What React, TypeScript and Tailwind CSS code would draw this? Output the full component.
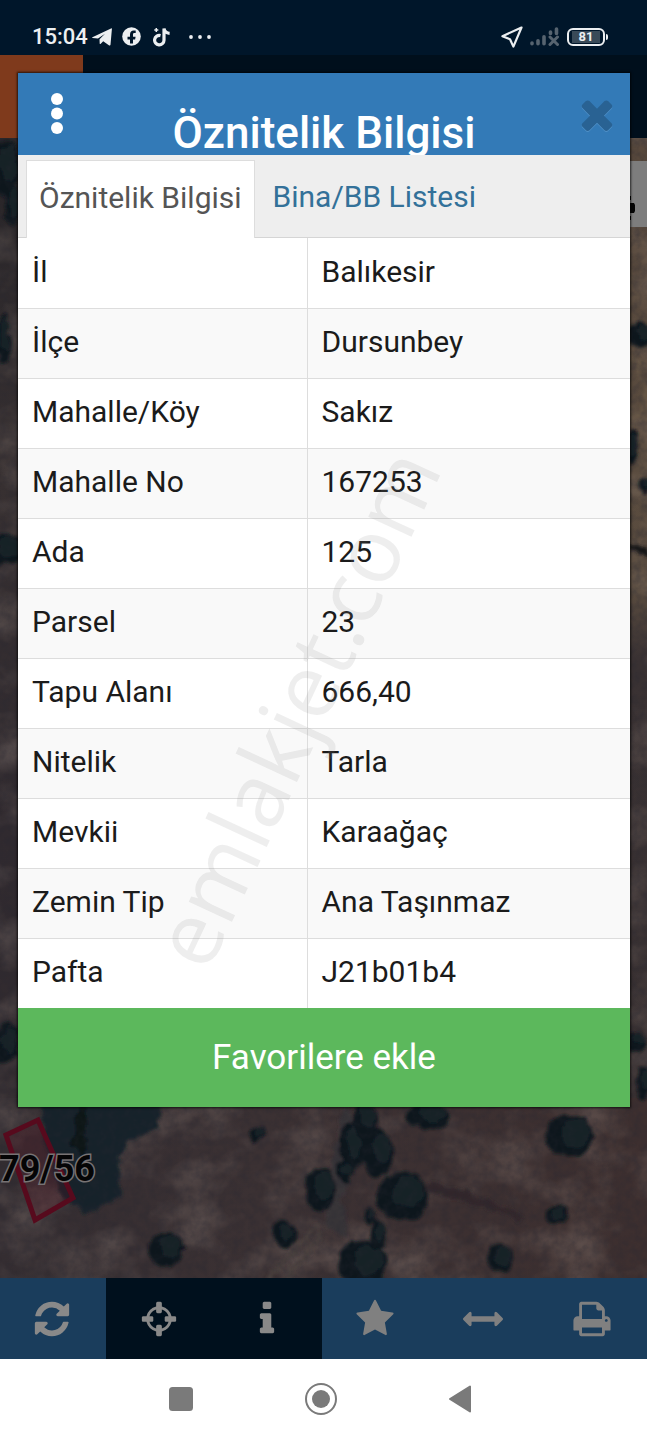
import React from "react";

const rows: [string, string][] = [
  ["İl", "Balıkesir"],
  ["İlçe", "Dursunbey"],
  ["Mahalle/Köy", "Sakız"],
  ["Mahalle No", "167253"],
  ["Ada", "125"],
  ["Parsel", "23"],
  ["Tapu Alanı", "666,40"],
  ["Nitelik", "Tarla"],
  ["Mevkii", "Karaağaç"],
  ["Zemin Tip", "Ana Taşınmaz"],
  ["Pafta", "J21b01b4"],
];

const paths = {
  refresh:
    "M1639 1056q0 5-1 7-64 268-268 434.5t-478 166.5q-146 0-282.5-55t-243.5-157l-129 129q-19 19-45 19t-45-19-19-45v-448q0-26 19-45t45-19h448q26 0 45 19t19 45-19 45l-137 137q71 66 161 102t187 36q134 0 250-65t186-179q11-17 53-117 8-23 30-23h192q13 0 22.5 9.5t9.5 22.5zm25-800v448q0 26-19 45t-45 19h-448q-26 0-45-19t-19-45 19-45l138-138q-148-137-349-137-134 0-250 65t-186 179q-11 17-53 117-8 23-30 23h-199q-13 0-22.5-9.5t-9.5-22.5v-7q65-268 270-434.5t480-166.5q146 0 284 55.5t245 156.5l130-129q19-19 45-19t45 19 19 45z",
  crosshairs:
    "M1325 1024h-109q-26 0-45-19t-19-45v-128q0-26 19-45t45-19h109q-32-108-112.5-188.5t-188.5-112.5v109q0 26-19 45t-45 19h-128q-26 0-45-19t-19-45v-109q-108 32-188.5 112.5t-112.5 188.5h109q26 0 45 19t19 45v128q0 26-19 45t-45 19h-109q32 108 112.5 188.5t188.5 112.5v-109q0-26 19-45t45-19h128q26 0 45 19t19 45v109q108-32 188.5-112.5t112.5-188.5zm339-192v128q0 26-19 45t-45 19h-143q-37 161-154.5 278.5t-278.5 154.5v143q0 26-19 45t-45 19h-128q-26 0-45-19t-19-45v-143q-161-37-278.5-154.5t-154.5-278.5h-143q-26 0-45-19t-19-45v-128q0-26 19-45t45-19h143q37-161 154.5-278.5t278.5-154.5v-143q0-26 19-45t45-19h128q26 0 45 19t19 45v143q161 37 278.5 154.5t154.5 278.5h143q26 0 45 19t19 45z",
  info: "M1216 1344v128q0 26-19 45t-45 19h-512q-26 0-45-19t-19-45v-128q0-26 19-45t45-19h64v-384h-64q-26 0-45-19t-19-45v-128q0-26 19-45t45-19h384q26 0 45 19t19 45v576h64q26 0 45 19t19 45zm-128-1152v192q0 26-19 45t-45 19h-256q-26 0-45-19t-19-45v-192q0-26 19-45t45-19h256q26 0 45 19t19 45z",
  star: "M1728 647q0 22-26 48l-363 354 86 500q1 7 1 20 0 21-10.5 35.5t-30.5 14.5q-19 0-40-12l-449-236-449 236q-22 12-40 12-21 0-31.5-14.5t-10.5-35.5q0-6 2-20l86-500-364-354q-25-27-25-48 0-37 56-46l502-73 225-455q19-41 49-41t49 41l225 455 502 73q56 9 56 46z",
  measure:
    "M1792 896q0 26-19 45l-256 256q-19 19-45 19t-45-19-19-45v-128h-1024v128q0 26-19 45t-45 19-45-19l-256-256q-19-19-19-45t19-45l256-256q19-19 45-19t45 19 19 45v128h1024v-128q0-26 19-45t45-19 45 19l256 256q19 19 19 45z",
  print:
    "M448 1536h896v-256h-896v256zm0-640h896v-384h-160q-40 0-68-28t-28-68v-160h-640v640zm1152 64q0-26-19-45t-45-19-45 19-19 45 19 45 45 19 45-19 19-45zm128 0v416q0 13-9.5 22.5t-22.5 9.5h-224v160q0 40-28 68t-68 28h-960q-40 0-68-28t-28-68v-160h-224q-13 0-22.5-9.5t-9.5-22.5v-416q0-79 56.5-135.5t135.5-56.5h64v-544q0-40 28-68t68-28h672q40 0 88 20t76 48l152 152q28 28 48 76t20 88v256h64q79 0 135.5 56.5t56.5 135.5z",
  times:
    "M1490 1322q0 40-28 68l-136 136q-28 28-68 28t-68-28l-294-294-294 294q-28 28-68 28t-68-28l-136-136q-28-28-28-68t28-68l294-294-294-294q-28-28-28-68t28-68l136-136q28-28 68-28t68 28l294 294 294-294q28-28 68-28t68 28l136 136q28 28 28 68t-28 68l-294 294 294 294q28 28 28 68z",
};

function Glyph({ name, className }: { name: keyof typeof paths; className: string }) {
  return (
    <svg viewBox="0 0 1792 1792" className={className} fill="currentColor" aria-hidden="true">
      <path d={paths[name]} />
    </svg>
  );
}

function StatusBar() {
  return (
    <div className="flex h-[55px] items-center justify-between bg-[#00162a] pt-[18px] pr-[39px] pl-8 text-[#eceff1]">
      <div className="flex items-center">
        <span className="text-[22px] leading-6 font-medium">15:04</span>
        <svg viewBox="0 0 20 18" className="ml-1 h-[18px] w-5" fill="currentColor" aria-hidden="true">
          <path d="M.4 9.200 19 .4c.6-.3 1 0 .9.6l-1.400 15.800c-.1.8-.7 1-1.300.6l-6-4.200-2.700 2.700c-.4.4-.8.2-.8-.4l-.2-4.300L13 5.800 6 10.500.4 9.900c-.4-.1-.4-.5 0-.7z" />
        </svg>
        <svg viewBox="0 0 19 19" className="ml-[10px] h-[19px] w-[19px]" aria-hidden="true">
          <circle cx="9.500" cy="9.500" r="9.300" fill="currentColor" />
          <path
            d="M8 16.500v-4H5.500V9.700H8V7.500c0-2.500 1.500-3.900 3.700-3.900h2v2.500h-1.300c-1 0-1.400.6-1.400 1.400v2.200h2.600l-.5 2.800H11v4z"
            fill="#00162a"
          />
        </svg>
        <svg viewBox="0 0 18 20" className="ml-3 h-5 w-[18px]" fill="none" stroke="currentColor" aria-hidden="true">
          <path d="M7.500 8.600A4.700 4.700 0 1 0 11 13.200V1.500c.5 3 2.500 4.600 5.600 4.800" strokeWidth="3.200" />
          <path d="M3.300 1v4M1.300 3h4" strokeWidth="1.500" />
        </svg>
        <svg viewBox="0 0 22 4" className="ml-[18px] h-1 w-[22px]" fill="currentColor" aria-hidden="true">
          <circle cx="2" cy="2" r="1.900" />
          <circle cx="11" cy="2" r="1.900" />
          <circle cx="20" cy="2" r="1.900" />
        </svg>
      </div>
      <div className="flex items-center">
        <svg viewBox="0 0 22 22" className="h-[22px] w-[22px]" fill="none" stroke="currentColor" strokeWidth="2.200" strokeLinejoin="round" aria-hidden="true">
          <path d="M20.500 1.500 1.400 10.200l7.600 3 3.400 7.400z" />
        </svg>
        <svg viewBox="0 0 29 19" className="ml-[7px] h-[19px] w-[29px] text-[#56636f]" stroke="currentColor" strokeWidth="3.600" strokeLinecap="round" fill="none" aria-hidden="true">
          <path d="M2 16.700v-.7M8 16.700v-3M14 16.700v-7M20.500 6.500V5M26.500 6.500V2" />
          <path d="m20 10 7.500 7.500m0-7.500L20 17.500" strokeWidth="3" />
        </svg>
        <div className="ml-2 flex items-center">
          <div className="flex h-[18px] w-[38px] items-center justify-center rounded-md border-2 border-[#eceff1]">
            <span className="flex h-3 w-7 items-center justify-center bg-[#394a58] text-[13px] leading-3 font-bold">81</span>
          </div>
          <span className="ml-px h-[6px] w-[2px] rounded-r bg-[#eceff1]" />
        </div>
      </div>
    </div>
  );
}

const trees: [number, number, number, number][] = [
  [570, 998, 25, 21],
  [402, 1058, 26, 24],
  [320, 1052, 16, 22],
  [352, 1006, 14, 24],
  [378, 1014, 15, 25],
  [364, 982, 12, 18],
  [345, 1032, 8, 12],
  [428, 978, 21, 14],
  [362, 1125, 24, 24],
  [378, 1096, 8, 14],
  [166, 1111, 18, 18],
  [285, 1096, 13, 13],
  [256, 996, 9, 8],
  [557, 1076, 11, 9],
  [500, 1120, 13, 15],
  [370, 1078, 6, 8],
  [4, 30, 16, 28],
  [12, 68, 9, 20],
  [4, 200, 7, 26],
  [4, 412, 18, 16],
  [6, 905, 14, 20],
  [640, 196, 17, 12],
  [632, 310, 7, 18],
  [644, 348, 7, 8],
  [636, 905, 12, 10],
  [644, 945, 8, 16],
];

function SatelliteMap() {
  return (
    <svg
      viewBox="0 0 647 1140"
      preserveAspectRatio="xMidYMax slice"
      className="absolute inset-0 h-full w-full"
      role="img"
      aria-label="Uydu haritası"
    >
      <defs>
        <linearGradient id="soil" x1="0" y1="0" x2="0" y2="1">
          <stop offset="0" stopColor="#282528" />
          <stop offset="0.300" stopColor="#373031" />
          <stop offset="0.600" stopColor="#302a2f" />
          <stop offset="1" stopColor="#332c2f" />
        </linearGradient>
        <linearGradient id="field" x1="0" y1="0" x2="0" y2="1">
          <stop offset="0" stopColor="#57483c" />
          <stop offset="0.450" stopColor="#5a4c3f" />
          <stop offset="0.520" stopColor="#3a3233" />
          <stop offset="1" stopColor="#383031" />
        </linearGradient>
        <linearGradient id="lower" x1="0" y1="0" x2="1" y2="0">
          <stop offset="0" stopColor="#342d31" />
          <stop offset="0.400" stopColor="#3b3133" />
          <stop offset="1" stopColor="#3d2f2f" />
        </linearGradient>
        <filter id="grain" x="0" y="0" width="100%" height="100%">
          <feTurbulence type="fractalNoise" baseFrequency="0.120" numOctaves="3" seed="4" />
          <feColorMatrix values="0 0 0 0 0.020  0 0 0 0 0.020  0 0 0 0 0.030  1.400 0 0 0 -0.500" />
        </filter>
        <filter id="patches" x="0" y="0" width="100%" height="100%">
          <feTurbulence type="fractalNoise" baseFrequency="0.018 0.022" numOctaves="4" seed="21" />
          <feColorMatrix values="0 0 0 0 0.420  0 0 0 0 0.330  0 0 0 0 0.280  0 1.200 0 0 -0.500" />
        </filter>
        <filter id="rough" x="-20%" y="-20%" width="140%" height="140%">
          <feTurbulence type="fractalNoise" baseFrequency="0.070" numOctaves="3" seed="2" result="noise" />
          <feDisplacementMap in="SourceGraphic" in2="noise" xChannelSelector="R" yChannelSelector="G" scale="12" />
          <feGaussianBlur stdDeviation="1.500" />
        </filter>
      </defs>
      <rect width="647" height="1140" fill="url(#soil)" />
      <rect x="560" width="87" height="1000" fill="url(#field)" />
      <rect y="960" width="647" height="180" fill="url(#lower)" />
      <rect width="647" height="1140" filter="url(#patches)" opacity="0.500" />
      <g filter="url(#rough)">
        <path d="M40 950H168L156 992 128 1002 118 1026 120 1060 84 1076 62 1060 44 1000z" fill="#15232a" />
        <path d="M78 965h10l-4 60-12-20z" fill="#0b1319" />
        <path d="M344 965 334 1010 326 1090 350 1100 342 1060 362 1000z" fill="#393439" />
        <path d="M318 1086 268 1142M322 1096 284 1142" stroke="#4a413e" strokeWidth="4" />
        <path d="M394 1045q60 4 126 35" stroke="#30262a" strokeWidth="8" fill="none" />
        <path d="M630 410q14 0 20 6" stroke="#151619" strokeWidth="7" fill="none" />
        <path d="M630 220q16 10 18 60M630 290q14-14 16-40" stroke="#695947" strokeWidth="3" fill="none" />
        {trees.map(([cx, cy, rx, ry]) => (
          <g key={`${cx}-${cy}`}>
            <ellipse cx={cx} cy={cy} rx={rx} ry={ry} fill="#0d131b" />
            <ellipse cx={cx + rx / 4} cy={cy - ry / 6} rx={rx * 0.6} ry={ry * 0.65} fill="#152128" />
          </g>
        ))}
      </g>
      <rect width="647" height="1140" filter="url(#grain)" opacity="0.450" />
      <path d="M6 997 38 982 73 1060 35 1082z" fill="#5c1224" fillOpacity="0.250" stroke="#570a1d" strokeWidth="5" />
      <text
        x="-1"
        y="1043"
        fontFamily="Roboto, sans-serif"
        fontSize="36"
        fontWeight="700"
        fill="#050506"
        stroke="#777374"
        strokeWidth="3"
        paintOrder="stroke"
      >
        79/56
      </text>
    </svg>
  );
}

function AttributeDialog() {
  return (
    <section
      role="dialog"
      aria-label="Öznitelik Bilgisi"
      className="relative z-10 mt-[18px] mr-[17px] mb-[171px] ml-[18px] self-start overflow-hidden bg-white shadow-[0_0_2px_1px_rgba(0,0,0,0.7)] [grid-area:1/1]"
    >
      <header className="grid h-[82px] grid-cols-[78px_1fr_78px] overflow-hidden bg-[#337ab7] text-white">
        <button type="button" aria-label="Menü" className="flex items-start pt-5 pl-[33px]">
          <svg viewBox="0 0 12 42" className="h-[42px] w-3" fill="currentColor" aria-hidden="true">
            <circle cx="6" cy="6" r="6" />
            <circle cx="6" cy="20.500" r="6" />
            <circle cx="6" cy="35" r="6" />
          </svg>
        </button>
        <h1 className="pt-9 text-center text-[44px] leading-[48px] font-medium whitespace-nowrap">Öznitelik Bilgisi</h1>
        <button type="button" aria-label="Kapat" className="flex items-start justify-end pt-[18px] pr-[10px] text-[#296293]">
          <Glyph name="times" className="h-[46px] w-[46px] drop-shadow-[0_1px_0_#4f8fc6]" />
        </button>
      </header>

      <div role="tablist" className="flex h-[83px] border-b border-[#d5d5d5] bg-[#eeeeee] pt-[5px] pl-2 text-[30px] leading-9">
        <button
          type="button"
          role="tab"
          aria-selected="true"
          className="-mb-px border border-b-0 border-[#dddddd] bg-white px-3 pb-1 text-[#555555]"
        >
          Öznitelik Bilgisi
        </button>
        <button type="button" role="tab" aria-selected="false" className="px-[18px] pb-1 text-[#337199]">
          Bina/BB Listesi
        </button>
      </div>

      <table className="w-full table-fixed border-collapse text-[30px] leading-9 text-[#1b1b1b]">
        <colgroup>
          <col className="w-[289px]" />
          <col />
        </colgroup>
        <tbody>
          {rows.map(([label, value]) => (
            <tr key={label} className="h-[70px] border-b border-[#dddddd] last:border-b-0 even:bg-[#f9f9f9]">
              <th scope="row" className="border-r border-[#dddddd] px-[14px] pb-[2px] text-left font-normal">
                {label}
              </th>
              <td className="px-[14px] pb-[2px]">{value}</td>
            </tr>
          ))}
        </tbody>
      </table>

      <button type="button" className="h-[99px] w-full bg-[#5cb85c] text-[35px] leading-10 text-white">
        Favorilere ekle
      </button>

      <div className="pointer-events-none absolute top-[634px] left-[276px] -translate-x-1/2 -translate-y-1/2 -rotate-[65deg] font-['Open_Sans',sans-serif] text-[89px] leading-none text-[#8a8a8a]/15 select-none">
        emlakjet.com
      </div>
    </section>
  );
}

const tools: { name: keyof typeof paths; label: string; tone: string }[] = [
  { name: "refresh", label: "Yenile", tone: "bg-[#1a3d5c] text-[#898989]" },
  { name: "crosshairs", label: "Konum", tone: "bg-[#00101d] text-[#898989]" },
  { name: "info", label: "Bilgi", tone: "bg-[#00101d] text-[#898989]" },
  { name: "star", label: "Favoriler", tone: "bg-[#1a3d5c] text-[#808080]" },
  { name: "measure", label: "Ölçüm", tone: "bg-[#1a3d5c] text-[#808080]" },
  { name: "print", label: "Yazdır", tone: "bg-[#1a3d5c] text-[#808080]" },
];

export default function App() {
  return (
    <div className="flex min-h-screen flex-col bg-white font-[Roboto,sans-serif]">
      <StatusBar />
      <main className="grid flex-1 grid-cols-1">
        <div className="flex flex-col [grid-area:1/1]">
          <div className="flex h-[83px] bg-[#000f1c]">
            <div className="w-[83px] bg-[#7f3a1c]" />
          </div>
          <div className="relative flex flex-1 items-start justify-end overflow-hidden bg-[#2f292b] pt-[23px]">
            <SatelliteMap />
            <div className="relative flex h-[66px] w-20 items-center justify-end bg-[#7d7d7d]">
              <svg viewBox="0 0 18 30" className="mt-7 h-[30px] w-[18px]" aria-hidden="true">
                <path d="M0 10h5l1 2v6l-1 2H0zM0 3h2v4H0zM0 23h2v4H0z" fill="#050505" />
              </svg>
            </div>
          </div>
        </div>
        <AttributeDialog />
      </main>
      <nav aria-label="Harita araçları" className="grid h-[81px] grid-cols-[106fr_108fr_108fr_108fr_108fr_109fr]">
        {tools.map(({ name, label, tone }) => (
          <button key={name} type="button" aria-label={label} className={`flex items-center justify-center pr-[2px] ${tone}`}>
            <Glyph name={name} className="h-10 w-10" />
          </button>
        ))}
      </nav>
      <nav aria-label="Sistem" className="flex h-[79px] items-center bg-white pl-[169px] text-[#7a7a7a]">
        <button type="button" aria-label="Son uygulamalar">
          <svg viewBox="0 0 24 24" className="h-6 w-6" fill="currentColor" aria-hidden="true">
            <rect width="24" height="24" rx="3.500" />
          </svg>
        </button>
        <button type="button" aria-label="Ana ekran" className="ml-28">
          <svg viewBox="0 0 32 32" className="h-8 w-8" aria-hidden="true">
            <circle cx="16" cy="16" r="15" fill="none" stroke="currentColor" strokeWidth="2" />
            <circle cx="16" cy="16" r="9" fill="currentColor" />
          </svg>
        </button>
        <button type="button" aria-label="Geri" className="ml-28">
          <svg viewBox="0 0 22 28" className="h-7 w-[22px]" fill="currentColor" stroke="currentColor" strokeWidth="2" strokeLinejoin="round" aria-hidden="true">
            <path d="M21 1.500v25L1 14z" />
          </svg>
        </button>
      </nav>
    </div>
  );
}
